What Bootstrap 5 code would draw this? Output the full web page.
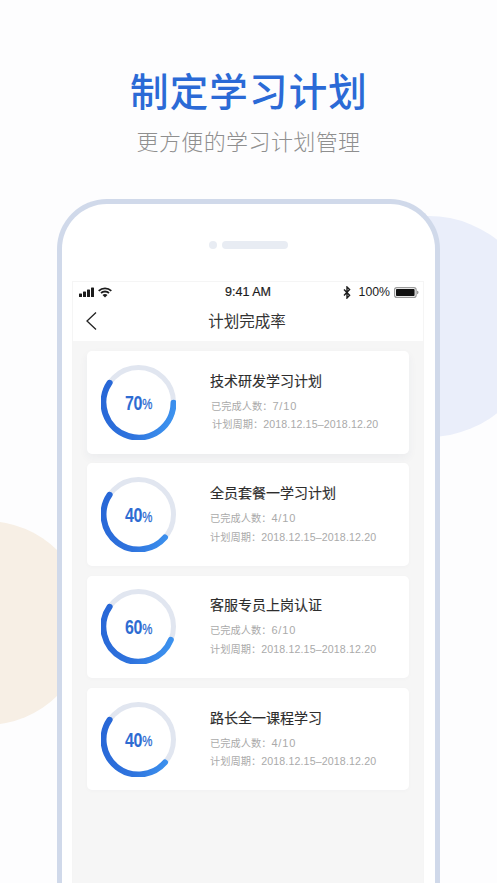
<!DOCTYPE html>
<html lang="zh-CN">
<head>
<meta charset="utf-8">
<title>制定学习计划</title>
<link href="https://cdn.jsdelivr.net/npm/bootstrap@5.3.0/dist/css/bootstrap.min.css" rel="stylesheet">
<style>
html,body{height:883px;overflow:hidden;background:#fdfdfe}
body{font-family:"Liberation Sans","Noto Sans CJK SC",sans-serif;position:relative;width:497px}
.blob-layer{position:absolute;inset:0;overflow:hidden}
.blob{position:absolute;border-radius:50%}
.blob-r{left:318px;top:216px;width:221px;height:221px;background:#eaeefa}
.blob-l{left:-116px;top:521px;width:204px;height:204px;background:#f7efe5}
.hero{position:relative;height:199px;padding-top:64px}
.hero-t{font-family:"Noto Sans CJK SC",sans-serif;font-size:38.5px;line-height:50px;font-weight:500;letter-spacing:1.15px;color:#2b6ad6;margin:0 0 0 1px}
.hero-s{font-family:"Noto Sans CJK SC",sans-serif;font-size:22px;line-height:32px;font-weight:300;letter-spacing:.4px;color:#8f8f8f;margin:10px 0 0}
.phone{position:relative;width:383px;height:684px;margin-left:57px;background:#fff;border:5px solid #d0d9ea;border-bottom:0;border-radius:50px 50px 0 0;padding:0 11px 0 10px}
.speaker{height:77px;padding-top:37px}
.spk-dot{width:8px;height:8px;border-radius:50%;background:#e8ecf3;margin-right:5px}
.spk-bar{width:66px;height:8px;border-radius:4px;background:#e8ecf3}
.screen{height:602px;background:#f6f6f6;border:1px solid #f5f5f5;border-bottom:0}
.sbar{height:20px;background:#fff;padding:0 4px 0 6px;font-size:12.3px;color:#1c1c1c;position:relative}
.sbar-time{position:absolute;left:0;right:0;text-align:center;font-size:12.5px;-webkit-text-stroke:.2px #1c1c1c}
.nav-row{height:39px;background:#fff;position:relative;font-family:"Noto Sans CJK SC",sans-serif;font-size:15.5px;color:#333;line-height:37px;padding-right:2px}
.back{position:absolute;left:11px;top:9px}
.plan-list{padding:10px 14px 0;gap:9.8px}
.plan-card{height:102.5px;background:#fff;border-radius:5px;padding-left:14px;box-shadow:0 1px 4px rgba(40,60,100,.025)}
.plan-first{box-shadow:0 4px 10px rgba(40,60,100,.05)}
.ring-box{position:relative;width:75px;height:75px;flex:none}
.ring-num{position:absolute;inset:0;display:flex;align-items:center;justify-content:center;color:#2e6cd2;font-weight:700;font-size:21px;line-height:1;transform:scaleX(.76);letter-spacing:-.3px}
.ring-num i{font-style:normal;font-size:15px;margin-top:3px;font-weight:400;-webkit-text-stroke:.3px #2e6cd2}
.plan-info{margin-left:34px;margin-top:-1px;font-family:"Noto Sans CJK SC",sans-serif}
.plan-name{font-size:14px;line-height:20px;color:#2d2d2d;margin:0 0 7px;font-weight:400;-webkit-text-stroke:.15px #2d2d2d}
.plan-meta{font-size:10.2px;line-height:18.5px;color:#aaa;margin:0;white-space:nowrap;letter-spacing:.05px}
.plan-meta span{font-family:"Liberation Sans",sans-serif;font-size:10.6px;letter-spacing:.15px}
.plan-meta .meta-count{letter-spacing:.8px;font-size:11px}
.nudge-1{margin-left:1px}
.nudge-2{margin-left:2px}
</style>
</head>
<body>
<svg width="0" height="0" class="d-block">
<defs>
<linearGradient id="ringGrad" gradientUnits="userSpaceOnUse" x1="0" y1="20" x2="75" y2="45">
<stop offset="0" stop-color="#2766d6"/><stop offset=".6" stop-color="#2f74de"/><stop offset="1" stop-color="#3d93ef"/>
</linearGradient>
</defs>
</svg>
<div class="blob-layer"><div class="blob blob-r"></div><div class="blob blob-l"></div></div>

<header class="hero text-center">
<h1 class="hero-t">制定学习计划</h1>
<p class="hero-s">更方便的学习计划管理</p>
</header>

<main class="phone">
<div class="speaker d-flex justify-content-center align-items-start">
<div class="spk-dot"></div><div class="spk-bar"></div>
</div>
<div class="screen d-flex flex-column">
<div class="sbar d-flex align-items-center">
<svg width="34" height="11" viewBox="0 0 34 11" fill="#1c1c1c">
<rect x="0" y="6.5" width="3" height="3.5" rx=".6"/><rect x="4" y="4.5" width="3" height="5.5" rx=".6"/><rect x="8" y="2.5" width="3" height="7.5" rx=".6"/><rect x="12" y="0.5" width="3" height="9.5" rx=".6"/>
<path d="M19.7 3.8C23.2.5 28.8.5 32.3 3.8" fill="none" stroke="#1c1c1c" stroke-width="1.8"/>
<path d="M22 6C24.2 4 27.8 4 30 6" fill="none" stroke="#1c1c1c" stroke-width="1.8"/>
<path d="M26 10.4l-2.5-2.5c1.4-1.1 3.6-1.1 5 0z"/>
</svg>
<div class="sbar-time">9:41 AM</div>
<div class="ms-auto d-flex align-items-center">
<svg width="8" height="13" viewBox="0 0 8 13" fill="none" stroke="#1c1c1c" stroke-width="1.4" class="me-2"><path d="M1 3.4l5.6 5.8L4 12V1l2.6 2.6L1 9.4"/></svg>
<span>100%</span>
<svg width="25" height="11" viewBox="0 0 25 11" class="ms-1"><rect x=".6" y=".6" width="21.5" height="9.8" rx="2.2" fill="none" stroke="#9a9a9a" stroke-width="1.2"/><rect x="2" y="2" width="18.6" height="7" rx=".8" fill="#111"/><path d="M23 3.8c1 .2 1.5.8 1.5 1.7s-.5 1.5-1.5 1.7z" fill="#9a9a9a"/></svg>
</div>
</div>
<div class="nav-row text-center">
<svg class="back" width="14" height="20" viewBox="0 0 14 20" fill="none" stroke="#222" stroke-width="1.3"><path d="M12 1.5L3 10l9 8.5"/></svg>
计划完成率
</div>
<div class="plan-list d-flex flex-column">

<section class="plan-card plan-first d-flex align-items-center">
<div class="ring-box">
<svg width="75" height="75" viewBox="0 0 75 75" fill="none"><circle cx="37.5" cy="37.5" r="35" stroke="#e1e6f0" stroke-width="5"/><path d="M8.6 17.8A35 35 0 1 0 72.5 37.8" stroke="url(#ringGrad)" stroke-width="6" stroke-linecap="round"/></svg>
<div class="ring-num">70<i>%</i></div>
</div>
<div class="plan-info">
<h2 class="plan-name">技术研发学习计划</h2>
<p class="plan-meta nudge-1">已完成人数：<span class="meta-count">7/10</span></p>
<p class="plan-meta nudge-2">计划周期：<span>2018.12.15–2018.12.20</span></p>
</div>
</section>

<section class="plan-card d-flex align-items-center">
<div class="ring-box">
<svg width="75" height="75" viewBox="0 0 75 75" fill="none"><circle cx="37.5" cy="37.5" r="35" stroke="#e1e6f0" stroke-width="5"/><path d="M8.6 17.8A35 35 0 0 0 64 60.4" stroke="url(#ringGrad)" stroke-width="6" stroke-linecap="round"/></svg>
<div class="ring-num">40<i>%</i></div>
</div>
<div class="plan-info">
<h2 class="plan-name">全员套餐一学习计划</h2>
<p class="plan-meta">已完成人数：<span class="meta-count">4/10</span></p>
<p class="plan-meta">计划周期：<span>2018.12.15–2018.12.20</span></p>
</div>
</section>

<section class="plan-card d-flex align-items-center">
<div class="ring-box">
<svg width="75" height="75" viewBox="0 0 75 75" fill="none"><circle cx="37.5" cy="37.5" r="35" stroke="#e1e6f0" stroke-width="5"/><path d="M8.6 17.8A35 35 0 1 0 69.8 50.9" stroke="url(#ringGrad)" stroke-width="6" stroke-linecap="round"/></svg>
<div class="ring-num">60<i>%</i></div>
</div>
<div class="plan-info">
<h2 class="plan-name">客服专员上岗认证</h2>
<p class="plan-meta">已完成人数：<span class="meta-count">6/10</span></p>
<p class="plan-meta">计划周期：<span>2018.12.15–2018.12.20</span></p>
</div>
</section>

<section class="plan-card d-flex align-items-center">
<div class="ring-box">
<svg width="75" height="75" viewBox="0 0 75 75" fill="none"><circle cx="37.5" cy="37.5" r="35" stroke="#e1e6f0" stroke-width="5"/><path d="M8.6 17.8A35 35 0 0 0 64 60.4" stroke="url(#ringGrad)" stroke-width="6" stroke-linecap="round"/></svg>
<div class="ring-num">40<i>%</i></div>
</div>
<div class="plan-info">
<h2 class="plan-name">路长全一课程学习</h2>
<p class="plan-meta">已完成人数：<span class="meta-count">4/10</span></p>
<p class="plan-meta">计划周期：<span>2018.12.15–2018.12.20</span></p>
</div>
</section>

</div>
</div>
</main>
<script src="https://cdn.jsdelivr.net/npm/bootstrap@5.3.0/dist/js/bootstrap.bundle.min.js"></script>
</body>
</html>
